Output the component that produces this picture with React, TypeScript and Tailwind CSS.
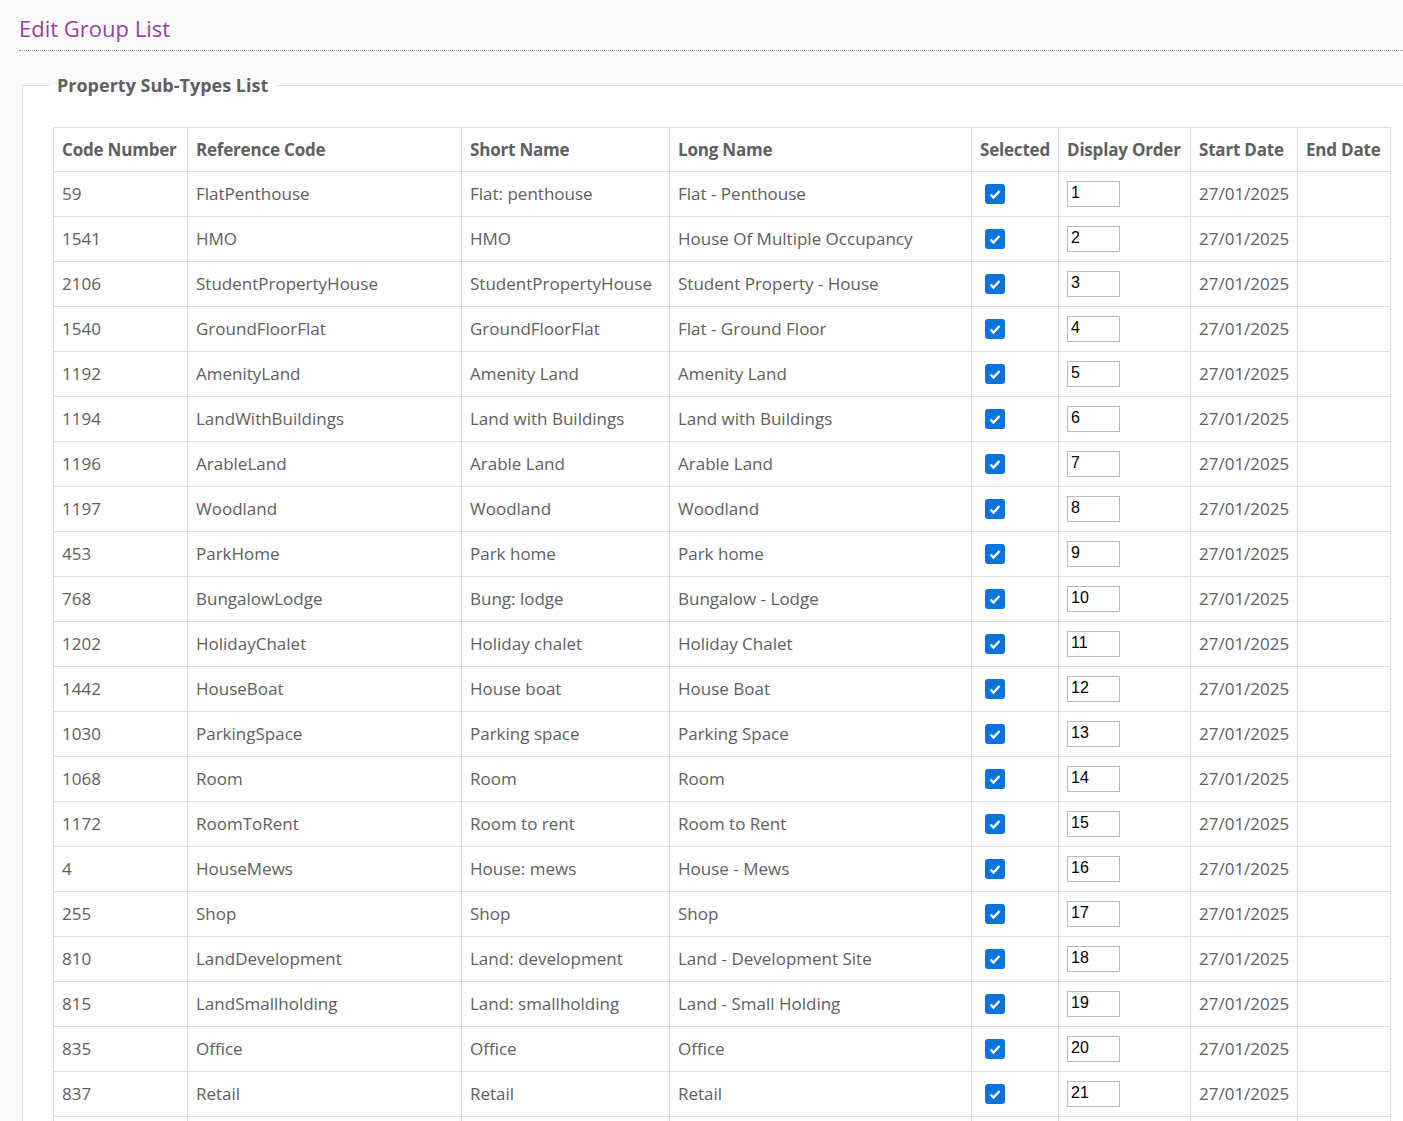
const rows: [string,string,string,string][] = [
["59","FlatPenthouse","Flat: penthouse","Flat - Penthouse"],
["1541","HMO","HMO","House Of Multiple Occupancy"],
["2106","StudentPropertyHouse","StudentPropertyHouse","Student Property - House"],
["1540","GroundFloorFlat","GroundFloorFlat","Flat - Ground Floor"],
["1192","AmenityLand","Amenity Land","Amenity Land"],
["1194","LandWithBuildings","Land with Buildings","Land with Buildings"],
["1196","ArableLand","Arable Land","Arable Land"],
["1197","Woodland","Woodland","Woodland"],
["453","ParkHome","Park home","Park home"],
["768","BungalowLodge","Bung: lodge","Bungalow - Lodge"],
["1202","HolidayChalet","Holiday chalet","Holiday Chalet"],
["1442","HouseBoat","House boat","House Boat"],
["1030","ParkingSpace","Parking space","Parking Space"],
["1068","Room","Room","Room"],
["1172","RoomToRent","Room to rent","Room to Rent"],
["4","HouseMews","House: mews","House - Mews"],
["255","Shop","Shop","Shop"],
["810","LandDevelopment","Land: development","Land - Development Site"],
["815","LandSmallholding","Land: smallholding","Land - Small Holding"],
["835","Office","Office","Office"],
["837","Retail","Retail","Retail"],
];
const widths = [134,274,208,302,87,132,107,93];
const heads = ["Code Number","Reference Code","Short Name","Long Name","Selected","Display Order","Start Date","End Date"];
export default function App(){
  return (
    <div className="h-[1121px] overflow-hidden bg-[#fafafa] text-[#606060]" style={{fontFamily:'"Open Sans","Noto Sans",sans-serif'}}>
      <div className="pl-[19px] pt-[12px]">
        <h1 className="text-[22px] leading-[32px] text-[#9c3fa8]">Edit Group List</h1>
        <div className="mt-[6px] border-t border-dotted border-[#999]"></div>
      </div>
      <fieldset className="ml-[22px] mt-[22px] border border-[#ddd] border-r-0 bg-white pl-[30px] pt-[30px] min-w-0">
        <legend className="ml-[-4px] px-[8px] text-[18px] font-bold leading-[24px] text-[#606060]">Property Sub-Types List</legend>
        <table className="border-collapse text-[17px] table-fixed" style={{width:1337}}>
          <colgroup>{widths.map((w,i)=><col key={i} style={{width:w}}/>)}</colgroup>
          <thead><tr className="h-[44px]">{heads.map(h=><th key={h} className="border border-[#ddd] px-[8px] text-left font-bold whitespace-nowrap tracking-[-0.2px]">{h}</th>)}</tr></thead>
          <tbody>{rows.map((r,i)=>(
            <tr key={i} className="h-[45px]">
              {r.map((c,j)=><td key={j} className="border border-[#ddd] px-[8px] whitespace-nowrap">{c}</td>)}
              <td className="border border-[#ddd] px-[13px]"><span className="flex h-[20px] w-[20px] items-center justify-center rounded-[3px] bg-[#0b74da]"><svg width="14" height="14" viewBox="0 0 14 14"><path d="M2.5 7.5l3 3 6-6.5" stroke="white" strokeWidth="2.4" fill="none"/></svg></span></td>
              <td className="border border-[#ddd] px-[8px]"><div className="h-[26px] w-[53px] border border-[#bbb] bg-white pl-[3px] text-[16px] leading-[22px] text-black" style={{fontFamily:'"Liberation Sans",Arial,sans-serif'}}>{i+1}</div></td>
              <td className="border border-[#ddd] px-[8px] whitespace-nowrap">27/01/2025</td>
              <td className="border border-[#ddd]"></td>
            </tr>))}
            <tr className="h-[45px]">{widths.map((_,j)=><td key={j} className="border border-[#ddd]"></td>)}</tr>
          </tbody>
        </table>
      </fieldset>
    </div>
  );
}
